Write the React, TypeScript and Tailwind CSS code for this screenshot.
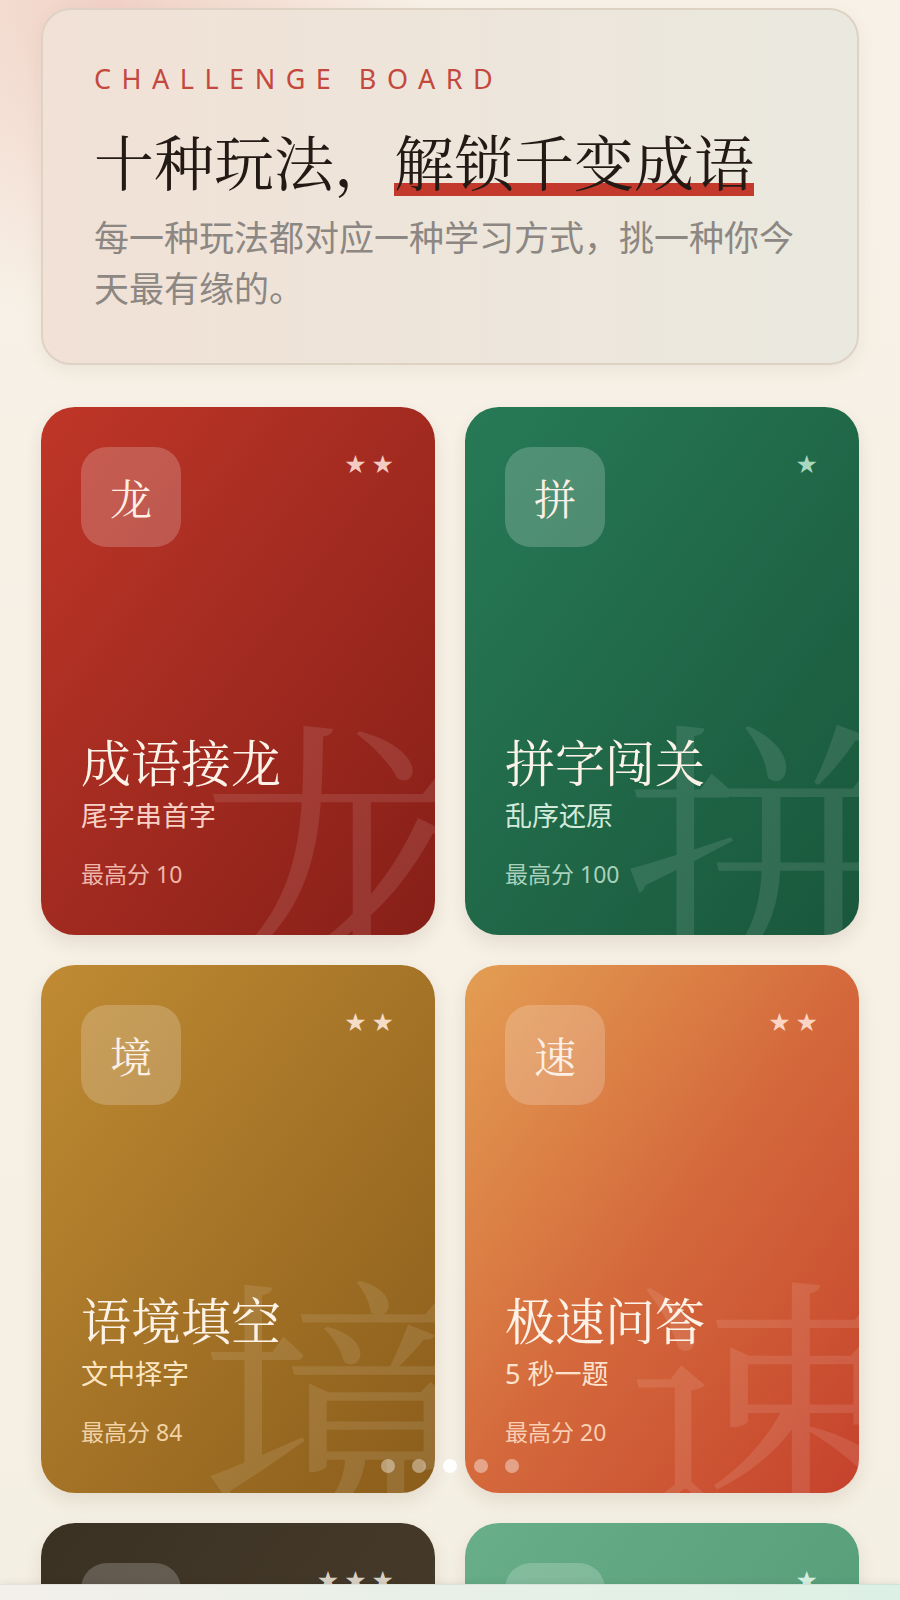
import React from 'react';

const serif =
  'font-["Noto_Serif_CJK_SC","Noto_Serif_SC","Source_Han_Serif_SC","AR_PL_UMing_CN","Liberation_Serif",serif]';
const sans = 'font-["Noto_Sans","Noto_Sans_CJK_SC",sans-serif]';

interface Mode {
  char: string;
  title: string;
  desc: string;
  best: string;
  stars: string;
  bg: string;
  descColor: string;
  bestColor: string;
  starColor: string;
}

const modes: Mode[] = [
  {
    char: '龙',
    title: '成语接龙',
    desc: '尾字串首字',
    best: '最高分 10',
    stars: '★★',
    bg: 'bg-linear-to-br from-[#bf3628] to-[#861f18]',
    descColor: 'text-[#f8d0c5]',
    bestColor: 'text-[#efb6a9]',
    starColor: 'text-[#f4cbc2]',
  },
  {
    char: '拼',
    title: '拼字闯关',
    desc: '乱序还原',
    best: '最高分 100',
    stars: '★',
    bg: 'bg-linear-to-br from-[#277a56] to-[#19573b]',
    descColor: 'text-[#d2eadb]',
    bestColor: 'text-[#a9d1bb]',
    starColor: 'text-[#a9d8bf]',
  },
  {
    char: '境',
    title: '语境填空',
    desc: '文中择字',
    best: '最高分 84',
    stars: '★★',
    bg: 'bg-linear-to-br from-[#c08b33] to-[#8a5d1b]',
    descColor: 'text-[#fce6c2]',
    bestColor: 'text-[#f1d3a6]',
    starColor: 'text-[#f4dcc6]',
  },
  {
    char: '速',
    title: '极速问答',
    desc: '5 秒一题',
    best: '最高分 20',
    stars: '★★',
    bg: 'bg-linear-to-br from-[#e39e53] via-[#d4693c] to-[#c5412c]',
    descColor: 'text-[#fde3cd]',
    bestColor: 'text-[#f9cfb4]',
    starColor: 'text-[#fbd5c4]',
  },
  {
    char: '典',
    title: '典故溯源',
    desc: '出处连线',
    best: '最高分 0',
    stars: '★★★',
    bg: 'bg-linear-to-br from-[#3b3123] to-[#4d412f]',
    descColor: 'text-[#e6dccb]',
    bestColor: 'text-[#c9bca6]',
    starColor: 'text-[#d9d1c4]',
  },
  {
    char: '义',
    title: '释义配对',
    desc: '词义相连',
    best: '最高分 0',
    stars: '★',
    bg: 'bg-linear-to-br from-[#68ae88] to-[#4b9470]',
    descColor: 'text-[#e2f3e8]',
    bestColor: 'text-[#cbe8d6]',
    starColor: 'text-[#d6efe0]',
  },
];

function ModeCard({ mode }: { mode: Mode }) {
  return (
    <div
      className={`relative h-[528px] overflow-hidden rounded-[34px] shadow-[0_8px_18px_rgba(90,50,20,0.10)] ${mode.bg}`}
    >
      {/* watermark */}
      <span
        className={`pointer-events-none absolute left-[158px] top-[292px] select-none text-[280px] leading-none text-white/10 ${serif}`}
      >
        {mode.char}
      </span>

      <div className="relative flex h-full flex-col px-[40px] pb-[46px] pt-[40px]">
        <div className="flex items-start justify-between">
          <div
            className={`flex h-[100px] w-[100px] items-center justify-center rounded-[26px] bg-white/20 text-[42px] leading-none text-[#fcefe6] ${serif}`}
          >
            {mode.char}
          </div>
          <div
            className={`mr-[-4px] mt-[6px] text-[25px] leading-[24px] tracking-[5px] ${mode.starColor} font-["DejaVu_Sans",sans-serif]`}
          >
            {mode.stars}
          </div>
        </div>

        <div className="mt-auto">
          <h3 className={`text-[50px] leading-[60px] text-[#fdf2e7] ${serif}`}>{mode.title}</h3>
          <p className={`mt-[8px] text-[27px] font-normal leading-[36px] ${mode.descColor} ${sans}`}>
            {mode.desc}
          </p>
          <p className={`mt-[25px] text-[23px] leading-[30px] ${mode.bestColor} ${sans}`}>{mode.best}</p>
        </div>
      </div>
    </div>
  );
}

export default function App() {
  return (
    <div className="relative h-[1600px] w-full overflow-hidden bg-[radial-gradient(circle_at_12%_0%,rgba(228,150,138,0.35),transparent_18%),linear-gradient(180deg,#f8f1e7_0%,#f4efe3_100%)]">
      <div className="px-[41px] pt-[8px]">
        {/* ── HEADER ───────────────────────────── */}
        <header className="rounded-[30px] border-2 border-[#ddd2c4] bg-linear-to-r from-[#f1e1d6] to-[#eae9df] px-[51px] pb-[49px] pt-[53px] shadow-[0_6px_18px_rgba(120,90,60,0.08)]">
          <p className={`text-[27px] leading-[32px] tracking-[10.5px] text-[#c4483d] ${sans}`}>
            CHALLENGE BOARD
          </p>
          <h1 className={`mt-[35px] text-[60px] leading-[60px] text-[#241a15] ${serif}`}>
            十种玩法，
            <span className="relative inline-block">
              <span className="absolute bottom-[-6px] left-0 right-0 h-[13px] bg-[#c3392b]" />
              <span className="relative">解锁千变成语</span>
            </span>
          </h1>
          <p className={`mt-[22px] text-[35px] leading-[51px] text-[#8c8782] ${sans}`}>
            每一种玩法都对应一种学习方式，挑一种你今天最有缘的。
          </p>
        </header>

        {/* ── MODES ───────────────────────────── */}
        <div className="mt-[42px] grid grid-cols-2 gap-x-[30px] gap-y-[30px]">
          {modes.map((m) => (
            <ModeCard key={m.char} mode={m} />
          ))}
        </div>
      </div>

      {/* page dots */}
      <div className="absolute left-1/2 top-[1459px] flex -translate-x-1/2 gap-[17px]">
        {[0, 1, 2, 3, 4].map((i) => (
          <span
            key={i}
            className={`h-[14px] w-[14px] rounded-full ${i === 2 ? 'bg-white/95' : 'bg-white/40'}`}
          />
        ))}
      </div>

      {/* bottom bar */}
      <div className="absolute bottom-0 left-0 h-[16px] w-full border-t border-black/5 bg-linear-to-r from-[#f3f0ea] to-[#ddf0e5] shadow-[0_-2px_6px_rgba(0,0,0,0.06)]" />
    </div>
  );
}
